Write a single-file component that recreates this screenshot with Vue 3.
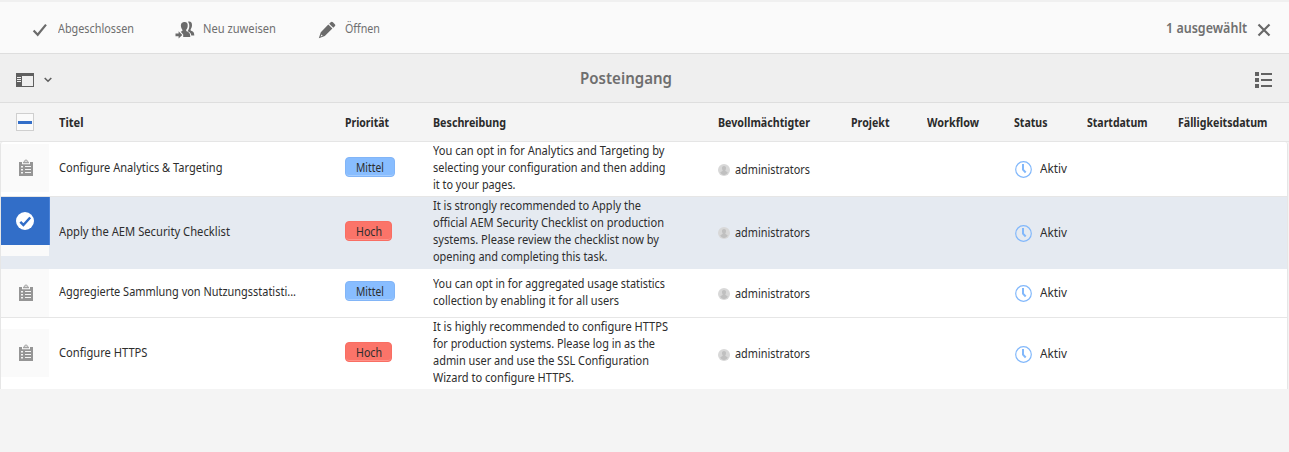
<script setup>
const columns = [
  { label: 'Titel', w: 24.5 },
  { label: 'Priorität', w: 44 },
  { label: 'Beschreibung', w: 73 },
  { label: 'Bevollmächtigter', w: 92 },
  { label: 'Projekt', w: 38.5 },
  { label: 'Workflow', w: 52 },
  { label: 'Status', w: 33.5 },
  { label: 'Startdatum', w: 60.5 },
  { label: 'Fälligkeitsdatum', w: 89.5 },
]

const rows = [
  {
    id: 'r1', title: 'Configure Analytics & Targeting', w: 163.500, high: false,
    text: [
      ['You can opt in for Analytics and Targeting by', 231.500],
      ['selecting your configuration and then adding', 232.500],
      ['it to your pages.', 82.500],
    ],
  },
  {
    id: 'r2', title: 'Apply the AEM Security Checklist', w: 171, high: true, selected: true,
    text: [
      ['It is strongly recommended to Apply the', 208],
      ['official AEM Security Checklist on production', 231],
      ['systems. Please review the checklist now by', 226],
      ['opening and completing this task.', 174.500],
    ],
  },
  {
    id: 'r3', title: 'Aggregierte Sammlung von Nutzungsstatisti...', w: 237, high: false,
    text: [
      ['You can opt in for aggregated usage statistics', 232],
      ['collection by enabling it for all users', 186],
    ],
  },
  {
    id: 'r4', title: 'Configure HTTPS', w: 88.500, high: true,
    text: [
      ['It is highly recommended to configure HTTPS', 235],
      ['for production systems. Please log in as the', 222],
      ['admin user and use the SSL Configuration', 216],
      ['Wizard to configure HTTPS.', 141],
    ],
  },
]

// Condenses a label so that it takes up the given width.
const vFit = {
  mounted(el, { value }) {
    const apply = () => {
      el.style.transform = 'none'
      const natural = el.getBoundingClientRect().width
      el.style.transform = `scaleX(${value / natural})`
      el.style.marginRight = `${value - natural}px`
    }
    apply()
    document.fonts?.ready.then(apply)
  },
}
</script>

<template>
  <div class="inbox">
    <header class="actions">
      <button class="action done">
        <svg width="16" height="16" viewBox="0 0 16 16"><path d="M1.6 8.6 5.7 12.8 14 2.6" fill="none" stroke="#6b6b6b" stroke-width="2.2" /></svg>
        <span v-fit="76" class="fit">Abgeschlossen</span>
      </button>
      <button class="action assign">
        <svg width="20" height="18" viewBox="0 0 20 18" fill="#6b6b6b">
          <path d="M13 .8c2.400-.8 4.300.9 4 3.600-.1 1.900-.8 2.800-1.300 3.800-.3 1 .1 1.500 1 1.900 1.600.7 2.500 1.200 2.600 4.300h-3c-.2-2.200-1.200-3.200-3.600-4.200 1.400-2 2.700-6.200.3-9.400Z" />
          <path d="M8.800 1c2.600-.5 4.200 1.200 3.900 3.900-.1 1.800-.8 2.700-1.400 3.700-.4.900 0 1.600.9 2 2.100.9 3 1.700 3.100 5.400H8.200v-2.600l-2.500-2.600c1.800-.6 2.200-1.100 1.500-2.300C5.400 5.700 5 1.600 8.800 1Z" />
          <path d="M.5 12.600h3.100v-2.300L7.300 14l-3.700 3.500v-2.300H.5Z" />
        </svg>
        <span v-fit="73" class="fit">Neu zuweisen</span>
      </button>
      <button class="action open">
        <svg width="18" height="18" viewBox="0 0 18 18" fill="#6b6b6b">
          <path d="M12.700 1.300c.7-.7 1.500-.7 2.200 0l1.900 2c.7.700.7 1.300 0 2L15.300 6.700l-4.100-4ZM10.300 3.600l4.100 4-7.600 7.500L.8 17.200l2-6ZM3.500 13.600l-.9 2 2.100-.8Z" fill-rule="evenodd" />
        </svg>
        <span v-fit="35" class="fit">Öffnen</span>
      </button>
      <span class="count"><span v-fit="81" class="fit">1 ausgewählt</span></span>
      <svg class="close" width="14" height="14" viewBox="0 0 14 14"><path d="M1.500 1.500 12.500 12.500M12.500 1.500 1.500 12.500" stroke="#686868" stroke-width="2.200" /></svg>
    </header>

    <div class="titlebar">
      <div class="rail">
        <svg width="18" height="14" viewBox="0 0 18 14" shape-rendering="crispEdges">
          <path d="M0 0h18v14H0ZM6 3v10h11V3ZM1 4v1h4V4ZM1 6v1h4V6ZM1 8v1h4V8Z" fill="#5f5f5f" fill-rule="evenodd" />
        </svg>
        <svg class="chevron" width="8" height="6" viewBox="0 0 8 6"><path d="M.7 1 4 4.200 7.300 1" fill="none" stroke="#5f5f5f" stroke-width="1.600" /></svg>
      </div>
      <h1><span v-fit="92" class="fit">Posteingang</span></h1>
      <svg class="list" width="17" height="16" viewBox="0 0 17 16" fill="#626262" shape-rendering="crispEdges">
        <path d="M0 0h4v4H0ZM6 1h11v2H6ZM0 6h4v4H0ZM6 7h11v2H6ZM0 12h4v4H0ZM6 13h11v2H6Z" />
      </svg>
    </div>

    <div class="grid head">
      <div class="pick"><span class="box"><i></i></span></div>
      <div v-for="c in columns" :key="c.label" class="th"><span v-fit="c.w" class="fit">{{ c.label }}</span></div>
    </div>

    <main class="body">
      <div v-for="r in rows" :key="r.id" class="grid row" :class="[r.id, { selected: r.selected }]">
        <div class="thumb">
          <div v-if="r.selected" class="mark">
            <svg width="18" height="18" viewBox="0 0 18 18"><circle cx="9" cy="9" r="9" fill="#fff" /><path d="M4.300 9.900 7.400 13 14.200 5.500" fill="none" stroke="#326ec8" stroke-width="2.500" /></svg>
          </div>
          <svg v-else width="14" height="17" viewBox="0 0 14 17">
            <path d="M0 3h3v2.200h8V3h3v14H0Z" fill="#959595" />
            <path d="M4 4.300V2.800h1.200C5.300 1.300 6 .5 7 .5s1.700.8 1.800 2.300H10v1.500Z" fill="#a2a2a2" />
            <circle cx="7" cy="2.200" r=".8" fill="#fafafa" />
            <path d="M2 7h2v1.500H2ZM6 7h6v1H6ZM2 10h2v1.500H2ZM6 10h6v1H6ZM2 13h2v1.500H2ZM6 13h6v1H6Z" fill="#f4f4f4" />
          </svg>
        </div>
        <div class="title"><span v-fit="r.w" class="fit">{{ r.title }}</span></div>
        <div class="prio">
          <span class="pill" :class="{ high: r.high }"><span v-fit="r.high ? 26 : 28" class="fit">{{ r.high ? 'Hoch' : 'Mittel' }}</span></span>
        </div>
        <div class="desc">
          <div v-for="line in r.text" :key="line[0]" class="line"><span v-fit="line[1]" class="fit">{{ line[0] }}</span></div>
        </div>
        <div class="who">
          <svg width="12" height="12" viewBox="0 0 12 12"><circle cx="6" cy="6" r="6" fill="#d8d8d8" /><path d="M6 2c1.500 0 2.200 1.100 2 2.600-.1 1-.5 1.600-.8 2 .1.900 2 1 2.600 2.200C9 10 7.600 11 6 11s-3-1-3.800-2.200c.6-1.200 2.500-1.300 2.600-2.200-.4-.4-.7-1-.8-2C3.800 3.100 4.500 2 6 2Z" fill="#c0c0c0" /></svg>
          <span v-fit="75" class="fit">administrators</span>
        </div>
        <div></div>
        <div></div>
        <div class="status">
          <svg width="17" height="17" viewBox="0 0 17 17" fill="none"><circle cx="8.500" cy="8.500" r="7.800" stroke="#82b8fb" stroke-width="1.200" /><path d="M8 3v5.600l2.700 2.900" stroke="#82b8fb" stroke-width="2" /></svg>
          <span v-fit="27" class="fit">Aktiv</span>
        </div>
        <div></div>
        <div></div>
      </div>
    </main>
  </div>
</template>

<style>
body { margin: 0; background: #f4f4f4; overflow: hidden; }
</style>

<style scoped>
.inbox { width: 1289px; height: 452px; box-sizing: border-box; background: #f4f4f4; font: 12.5px/17px "Noto Sans", "Open Sans", sans-serif; color: #2d2d2d; overflow: hidden; }
.fit { display: inline-block; white-space: nowrap; transform-origin: 0 50%; }
svg { display: block; flex: none; }
.actions { box-sizing: border-box; height: 54px; display: flex; align-items: center; border-top: 2px solid #f0f0f0; border-bottom: 1px solid #dedede; background: #fafafa; padding: 4px 18px 0 32px; }
.action { display: flex; align-items: center; padding: 0; border: 0; background: none; font: inherit; color: #6e6e6e; }
.action .fit { margin-top: -2px; }
.done .fit { margin-left: 10px; }
.assign { margin-left: 41px; }
.assign .fit { margin-left: 8px; }
.open { margin-left: 42px; }
.open .fit { margin-left: 9px; }
.count { margin: -4px 10px 0 auto; font-size: 14px; font-weight: 600; color: #707070; }
.titlebar { box-sizing: border-box; height: 49px; display: flex; align-items: center; border-bottom: 1px solid #dedede; background: #efefef; padding: 3px 17px 0 16px; }
.rail { display: flex; align-items: center; width: 564px; }
.chevron { margin-left: 10px; }
h1 { margin: -3px 0 0; font-size: 16px; line-height: 22px; font-weight: 600; color: #6e6e6e; white-space: nowrap; }
.list { margin-left: auto; }
.grid { display: grid; grid-template-columns: 58px 286px 88px 285px 133px 76px 87px 73px 91px 110px; align-items: center; }
.head { height: 38px; padding-left: 1px; border-bottom: 1px solid #e5e5e5; font-weight: 700; font-size: 12px; color: #2b2b2b; }
.th { padding-top: 0; }
.box { box-sizing: border-box; width: 18px; height: 18px; display: flex; align-items: center; justify-content: center; margin-left: 15px; border: 1px solid #cfcfcf; background: #fafafa; }
.box i { width: 14px; height: 3px; background: #326ec8; }
.body { width: 1286px; border-left: 1px solid #e6e6e6; border-right: 1px solid #e6e6e6; border-radius: 3px 3px 0 0; background: #fff; overflow: hidden; }
.row { box-sizing: border-box; border-bottom: 1px solid #e6e6e6; }
.r1 { height: 55px; }
.r2 { height: 72px; }
.r3 { height: 49px; }
.r4 { height: 71px; border-bottom: 0; }
.selected { background: #e5eaf1; border-bottom-color: #e5eaf1; }
.thumb { box-sizing: border-box; width: 48px; height: 48px; background: #fafafa; display: flex; align-items: center; justify-content: center; margin-top: -2px; padding: 0 0 1px 1px; }
.r3 .thumb { margin-top: 0; }
.selected .thumb { align-self: start; height: 59px; margin: 0; padding: 0; display: block; }
.mark { width: 49px; height: 48px; box-sizing: border-box; padding: 15px; background: #326ec8; border-right: 1px solid #4a82d8; }
.title { margin-top: -3px; }
.r4 .title, .selected .title { margin-top: -2px; }
.prio { margin-top: -5px; }
.r4 .prio, .selected .prio { margin-top: -3px; }
.pill { box-sizing: border-box; display: flex; align-items: center; width: 50px; height: 20px; padding: 1px 0 0 10px; border: 1px solid #82b5f7; border-radius: 4px; background: #88bdff; box-shadow: inset 0 -1px #a5cdff; }
.pill.high { width: 47px; border-color: #f96e63; background: #fb7469; box-shadow: inset 0 -1px #ff9188; }
.desc { margin-top: -3px; }
.line { height: 17px; }
.who { display: flex; align-items: center; }
.who svg { margin: 2px 5px 0 0; }
.selected .who { margin-top: -1px; }
.status { display: flex; align-items: center; margin-left: 1px; }
.r4 .status, .selected .status { margin-top: 2px; }
.status .fit { margin-left: 8px; margin-top: -2px; }
</style>
